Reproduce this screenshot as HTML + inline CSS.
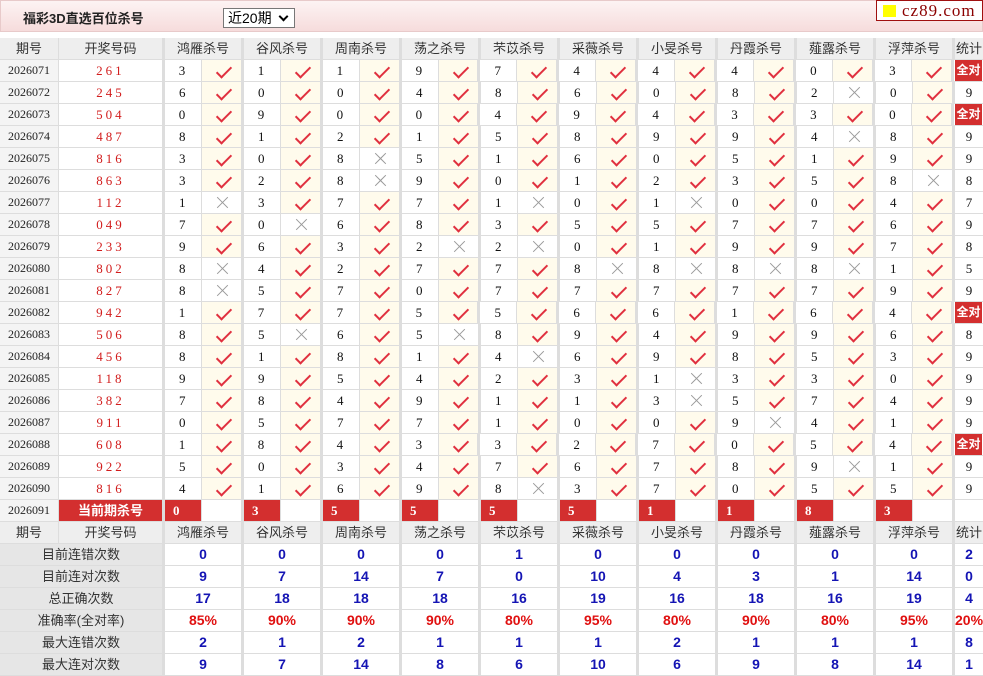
<!DOCTYPE html><html><head><meta charset="utf-8"><style>
*{margin:0;padding:0;box-sizing:border-box}
body{width:983px;height:676px;overflow:hidden;background:#fff;font-family:"Liberation Serif","Noto Serif CJK SC",serif;position:relative}
.top{position:absolute;left:0;top:0;width:983px;height:32px;background:linear-gradient(#fdf3f3,#f6dcdc);border:1px solid #e8caca}
.ttl{position:absolute;left:22px;top:7px;font:bold 13px "Liberation Sans","Noto Sans CJK SC",sans-serif;color:#222}
.sel{position:absolute;left:222px;top:7px;width:72px;height:20px;border:1px solid #777;background:#fff;font:14px "Liberation Sans","Noto Sans CJK SC",sans-serif;padding-left:4px;line-height:18px}
.sel:after{content:"";position:absolute;right:7px;top:4px;width:5px;height:5px;border-right:2px solid #000;border-bottom:2px solid #000;transform:rotate(45deg)}
.logo{position:absolute;left:876px;top:0;width:107px;height:21px;border:1px solid #a01010;background:#fff;font:17px "Liberation Serif",serif;color:#8b0000;line-height:19px;padding-left:25px;letter-spacing:1px}
.logo:before{content:"";position:absolute;left:6px;top:4px;width:13px;height:12px;background:#ffff00}
.tb{position:absolute;left:0;top:38px;width:983px}
.r{display:flex;height:22px;border-bottom:1px solid #ddd}
.r>*{display:block;height:21px;line-height:21px;text-align:center;font-style:normal;text-decoration:none;font-weight:normal;position:relative;font-size:13px}
.r b{width:59px;border-right:1px solid #ddd;background:#f4f4f4;font-size:12px;color:#222}
.r s{width:106px;border-right:3px solid #ddd;color:#d21d1d;letter-spacing:3px;font-size:13px}
.r i{width:37px;border-right:1px solid #ddd;text-align:left;padding-left:14px;color:#111}
.r u{width:42px;border-right:3px solid #ddd;background:#fffbec}
.r u.n{background:#fff}
.r u.y:after{content:"";position:absolute;left:18px;top:3px;width:6px;height:13px;border-right:2px solid #e0303f;border-bottom:2px solid #e0303f;transform:rotate(45deg)}
.r u.n:before,.r u.n:after{content:"";position:absolute;left:13px;top:10px;width:15px;height:1px;background:#999;transform:rotate(45deg)}
.r u.n:after{transform:rotate(-45deg)}
.r em{width:28px;color:#111}
.r em.a{background:#d32f2f;color:#fff;font:bold 12px "Liberation Sans","Noto Sans CJK SC",sans-serif;line-height:21px;margin:0 1px;width:27px}
.h>*{background:#eee!important;font-family:"Liberation Sans","Noto Sans CJK SC",sans-serif!important;color:#333!important;font-size:13px!important;letter-spacing:0!important}
.h i{width:79px!important;border-right:3px solid #ddd!important;text-align:center!important;padding:0!important}
.k s{background:#d32f2f;color:#fff;font:bold 13px "Liberation Sans","Noto Sans CJK SC",sans-serif;letter-spacing:0}
.k i{background:#d32f2f;color:#fff;font-weight:bold;padding-left:8px}
.k u{background:#fff}
.t b{width:165px;border-right:3px solid #ddd;background:#e6e6e6;font:13px "Liberation Sans","Noto Sans CJK SC",sans-serif;color:#333}
.t i{width:79px;border-right:3px solid #ddd;text-align:center;padding:0;font:bold 14px "Liberation Sans",sans-serif;color:#1414b4;line-height:21px}
.t em{font:bold 14px "Liberation Sans",sans-serif;color:#1414b4;line-height:21px}
.p i,.p em{color:#e01010}
</style></head><body>
<div class="top"><div class="ttl">福彩3D直选百位杀号</div><div class="sel">近20期</div></div>
<div class="logo">cz89.com</div>
<div class="tb">
<div class="r h"><b>期号</b><s>开奖号码</s><i>鸿雁杀号</i><i>谷风杀号</i><i>周南杀号</i><i>荡之杀号</i><i>芣苡杀号</i><i>采薇杀号</i><i>小旻杀号</i><i>丹霞杀号</i><i>薤露杀号</i><i>浮萍杀号</i><em>统计</em></div>
<div class="r"><b>2026071</b><s>261</s><i>3</i><u class="y"></u><i>1</i><u class="y"></u><i>1</i><u class="y"></u><i>9</i><u class="y"></u><i>7</i><u class="y"></u><i>4</i><u class="y"></u><i>4</i><u class="y"></u><i>4</i><u class="y"></u><i>0</i><u class="y"></u><i>3</i><u class="y"></u><em class="a">全对</em></div>
<div class="r"><b>2026072</b><s>245</s><i>6</i><u class="y"></u><i>0</i><u class="y"></u><i>0</i><u class="y"></u><i>4</i><u class="y"></u><i>8</i><u class="y"></u><i>6</i><u class="y"></u><i>0</i><u class="y"></u><i>8</i><u class="y"></u><i>2</i><u class="n"></u><i>0</i><u class="y"></u><em>9</em></div>
<div class="r"><b>2026073</b><s>504</s><i>0</i><u class="y"></u><i>9</i><u class="y"></u><i>0</i><u class="y"></u><i>0</i><u class="y"></u><i>4</i><u class="y"></u><i>9</i><u class="y"></u><i>4</i><u class="y"></u><i>3</i><u class="y"></u><i>3</i><u class="y"></u><i>0</i><u class="y"></u><em class="a">全对</em></div>
<div class="r"><b>2026074</b><s>487</s><i>8</i><u class="y"></u><i>1</i><u class="y"></u><i>2</i><u class="y"></u><i>1</i><u class="y"></u><i>5</i><u class="y"></u><i>8</i><u class="y"></u><i>9</i><u class="y"></u><i>9</i><u class="y"></u><i>4</i><u class="n"></u><i>8</i><u class="y"></u><em>9</em></div>
<div class="r"><b>2026075</b><s>816</s><i>3</i><u class="y"></u><i>0</i><u class="y"></u><i>8</i><u class="n"></u><i>5</i><u class="y"></u><i>1</i><u class="y"></u><i>6</i><u class="y"></u><i>0</i><u class="y"></u><i>5</i><u class="y"></u><i>1</i><u class="y"></u><i>9</i><u class="y"></u><em>9</em></div>
<div class="r"><b>2026076</b><s>863</s><i>3</i><u class="y"></u><i>2</i><u class="y"></u><i>8</i><u class="n"></u><i>9</i><u class="y"></u><i>0</i><u class="y"></u><i>1</i><u class="y"></u><i>2</i><u class="y"></u><i>3</i><u class="y"></u><i>5</i><u class="y"></u><i>8</i><u class="n"></u><em>8</em></div>
<div class="r"><b>2026077</b><s>112</s><i>1</i><u class="n"></u><i>3</i><u class="y"></u><i>7</i><u class="y"></u><i>7</i><u class="y"></u><i>1</i><u class="n"></u><i>0</i><u class="y"></u><i>1</i><u class="n"></u><i>0</i><u class="y"></u><i>0</i><u class="y"></u><i>4</i><u class="y"></u><em>7</em></div>
<div class="r"><b>2026078</b><s>049</s><i>7</i><u class="y"></u><i>0</i><u class="n"></u><i>6</i><u class="y"></u><i>8</i><u class="y"></u><i>3</i><u class="y"></u><i>5</i><u class="y"></u><i>5</i><u class="y"></u><i>7</i><u class="y"></u><i>7</i><u class="y"></u><i>6</i><u class="y"></u><em>9</em></div>
<div class="r"><b>2026079</b><s>233</s><i>9</i><u class="y"></u><i>6</i><u class="y"></u><i>3</i><u class="y"></u><i>2</i><u class="n"></u><i>2</i><u class="n"></u><i>0</i><u class="y"></u><i>1</i><u class="y"></u><i>9</i><u class="y"></u><i>9</i><u class="y"></u><i>7</i><u class="y"></u><em>8</em></div>
<div class="r"><b>2026080</b><s>802</s><i>8</i><u class="n"></u><i>4</i><u class="y"></u><i>2</i><u class="y"></u><i>7</i><u class="y"></u><i>7</i><u class="y"></u><i>8</i><u class="n"></u><i>8</i><u class="n"></u><i>8</i><u class="n"></u><i>8</i><u class="n"></u><i>1</i><u class="y"></u><em>5</em></div>
<div class="r"><b>2026081</b><s>827</s><i>8</i><u class="n"></u><i>5</i><u class="y"></u><i>7</i><u class="y"></u><i>0</i><u class="y"></u><i>7</i><u class="y"></u><i>7</i><u class="y"></u><i>7</i><u class="y"></u><i>7</i><u class="y"></u><i>7</i><u class="y"></u><i>9</i><u class="y"></u><em>9</em></div>
<div class="r"><b>2026082</b><s>942</s><i>1</i><u class="y"></u><i>7</i><u class="y"></u><i>7</i><u class="y"></u><i>5</i><u class="y"></u><i>5</i><u class="y"></u><i>6</i><u class="y"></u><i>6</i><u class="y"></u><i>1</i><u class="y"></u><i>6</i><u class="y"></u><i>4</i><u class="y"></u><em class="a">全对</em></div>
<div class="r"><b>2026083</b><s>506</s><i>8</i><u class="y"></u><i>5</i><u class="n"></u><i>6</i><u class="y"></u><i>5</i><u class="n"></u><i>8</i><u class="y"></u><i>9</i><u class="y"></u><i>4</i><u class="y"></u><i>9</i><u class="y"></u><i>9</i><u class="y"></u><i>6</i><u class="y"></u><em>8</em></div>
<div class="r"><b>2026084</b><s>456</s><i>8</i><u class="y"></u><i>1</i><u class="y"></u><i>8</i><u class="y"></u><i>1</i><u class="y"></u><i>4</i><u class="n"></u><i>6</i><u class="y"></u><i>9</i><u class="y"></u><i>8</i><u class="y"></u><i>5</i><u class="y"></u><i>3</i><u class="y"></u><em>9</em></div>
<div class="r"><b>2026085</b><s>118</s><i>9</i><u class="y"></u><i>9</i><u class="y"></u><i>5</i><u class="y"></u><i>4</i><u class="y"></u><i>2</i><u class="y"></u><i>3</i><u class="y"></u><i>1</i><u class="n"></u><i>3</i><u class="y"></u><i>3</i><u class="y"></u><i>0</i><u class="y"></u><em>9</em></div>
<div class="r"><b>2026086</b><s>382</s><i>7</i><u class="y"></u><i>8</i><u class="y"></u><i>4</i><u class="y"></u><i>9</i><u class="y"></u><i>1</i><u class="y"></u><i>1</i><u class="y"></u><i>3</i><u class="n"></u><i>5</i><u class="y"></u><i>7</i><u class="y"></u><i>4</i><u class="y"></u><em>9</em></div>
<div class="r"><b>2026087</b><s>911</s><i>0</i><u class="y"></u><i>5</i><u class="y"></u><i>7</i><u class="y"></u><i>7</i><u class="y"></u><i>1</i><u class="y"></u><i>0</i><u class="y"></u><i>0</i><u class="y"></u><i>9</i><u class="n"></u><i>4</i><u class="y"></u><i>1</i><u class="y"></u><em>9</em></div>
<div class="r"><b>2026088</b><s>608</s><i>1</i><u class="y"></u><i>8</i><u class="y"></u><i>4</i><u class="y"></u><i>3</i><u class="y"></u><i>3</i><u class="y"></u><i>2</i><u class="y"></u><i>7</i><u class="y"></u><i>0</i><u class="y"></u><i>5</i><u class="y"></u><i>4</i><u class="y"></u><em class="a">全对</em></div>
<div class="r"><b>2026089</b><s>922</s><i>5</i><u class="y"></u><i>0</i><u class="y"></u><i>3</i><u class="y"></u><i>4</i><u class="y"></u><i>7</i><u class="y"></u><i>6</i><u class="y"></u><i>7</i><u class="y"></u><i>8</i><u class="y"></u><i>9</i><u class="n"></u><i>1</i><u class="y"></u><em>9</em></div>
<div class="r"><b>2026090</b><s>816</s><i>4</i><u class="y"></u><i>1</i><u class="y"></u><i>6</i><u class="y"></u><i>9</i><u class="y"></u><i>8</i><u class="n"></u><i>3</i><u class="y"></u><i>7</i><u class="y"></u><i>0</i><u class="y"></u><i>5</i><u class="y"></u><i>5</i><u class="y"></u><em>9</em></div>
<div class="r k"><b>2026091</b><s>当前期杀号</s><i>0</i><u></u><i>3</i><u></u><i>5</i><u></u><i>5</i><u></u><i>5</i><u></u><i>5</i><u></u><i>1</i><u></u><i>1</i><u></u><i>8</i><u></u><i>3</i><u></u><em></em></div>
<div class="r h"><b>期号</b><s>开奖号码</s><i>鸿雁杀号</i><i>谷风杀号</i><i>周南杀号</i><i>荡之杀号</i><i>芣苡杀号</i><i>采薇杀号</i><i>小旻杀号</i><i>丹霞杀号</i><i>薤露杀号</i><i>浮萍杀号</i><em>统计</em></div>
<div class="r t"><b>目前连错次数</b><i>0</i><i>0</i><i>0</i><i>0</i><i>1</i><i>0</i><i>0</i><i>0</i><i>0</i><i>0</i><em>2</em></div>
<div class="r t"><b>目前连对次数</b><i>9</i><i>7</i><i>14</i><i>7</i><i>0</i><i>10</i><i>4</i><i>3</i><i>1</i><i>14</i><em>0</em></div>
<div class="r t"><b>总正确次数</b><i>17</i><i>18</i><i>18</i><i>18</i><i>16</i><i>19</i><i>16</i><i>18</i><i>16</i><i>19</i><em>4</em></div>
<div class="r t p"><b>准确率(全对率)</b><i>85%</i><i>90%</i><i>90%</i><i>90%</i><i>80%</i><i>95%</i><i>80%</i><i>90%</i><i>80%</i><i>95%</i><em>20%</em></div>
<div class="r t"><b>最大连错次数</b><i>2</i><i>1</i><i>2</i><i>1</i><i>1</i><i>1</i><i>2</i><i>1</i><i>1</i><i>1</i><em>8</em></div>
<div class="r t"><b>最大连对次数</b><i>9</i><i>7</i><i>14</i><i>8</i><i>6</i><i>10</i><i>6</i><i>9</i><i>8</i><i>14</i><em>1</em></div>
</div>
</body></html>
